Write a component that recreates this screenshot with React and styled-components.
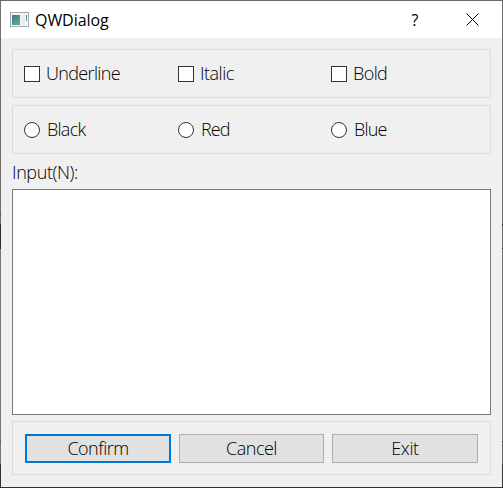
import React from "react";
import styled, { createGlobalStyle } from "styled-components";

const Page = createGlobalStyle`
  * { box-sizing: border-box; }
  body { margin: 0; overflow: hidden; }
`;

const Window = styled.div`
  display: grid;
  grid-template-columns: 1px 1fr 1px;
  grid-template-rows: 1px 486px 1px;
  width: 503px;
  height: 488px;
  background: #6f6f6f;
  font-family: "Open Sans", "Noto Sans", sans-serif;
  color: #000;
`;

const TopEdge = styled.div`
  grid-column: 1 / -1;
  background: #6a6a6a;
`;

const BottomEdge = styled.div`
  grid-column: 1 / -1;
  background: #323234;
`;

const LeftEdge = styled.div`
  background: linear-gradient(#6f6f6f 213px, #333 213px 214px, #6f6f6f 214px 223px, #2c2c2c 223px 248px, #777 248px 440px, #444 440px 441px, #777 441px 463px, #323234 463px);
`;

const RightEdge = styled.div`
  background: linear-gradient(#6f6f6f 223px, #2c2c2c 223px 225px, #6f6f6f 225px 247px, #333 247px 248px, #777 248px 440px, #444 440px 441px, #666 441px 463px, #323234 463px);
`;

const Surface = styled.div`
  display: flex;
  flex-direction: column;
  background: #f0f0f0;
`;

const TitleBar = styled.header`
  display: flex;
  align-items: center;
  height: 37px;
  padding: 0 23px 0 9px;
  background: #fff;
`;

const AppIcon = styled.svg`
  width: 19px;
  height: 16px;
  margin-right: 6px;
`;

const Title = styled.span`
  flex: 1;
  font-size: 16px;
  letter-spacing: -0.05px;
  line-height: 20px;
`;

const Help = styled.span`
  width: 10px;
  margin-right: 46px;
  font-size: 16px;
  line-height: 20px;
  text-align: center;
`;

const CloseIcon = styled.svg`
  width: 13px;
  height: 13px;
`;

const Body = styled.main`
  display: flex;
  flex-direction: column;
  padding: 11px 11px 12px;
`;

const Group = styled.section`
  display: grid;
  grid-template-columns: 154px 153px 1fr;
  align-items: center;
  height: 49px;
  margin-bottom: 7px;
  padding-left: 11px;
  border: 1px solid #dcdcdc;
`;

const Choice = styled.label`
  display: flex;
  align-items: center;
  gap: ${({ $round }) => ($round ? 7 : 6)}px;
`;

const Mark = styled.input`
  appearance: none;
  width: 16px;
  height: 16px;
  margin: 0;
  border: 1px solid #333;
  border-radius: ${({ type }) => (type === "radio" ? "50%" : "0")};
  background: #fff;
`;

const Text = styled.span`
  padding-bottom: 2px;
  font-size: 18px;
  font-weight: 300;
  line-height: 22px;
  letter-spacing: ${({ $tracking = -0.4 }) => $tracking}px;
  white-space: nowrap;
`;

const FieldLabel = styled.label`
  display: flex;
  align-items: flex-start;
  height: 28px;
`;

const Editor = styled.textarea`
  display: block;
  height: 226px;
  margin: 0 0 6px;
  border: 1px solid #7a7a7a;
  background: #fff;
  resize: none;
  outline: none;
`;

const Actions = styled.footer`
  display: grid;
  grid-template-columns: 146px 145px 146px;
  gap: 8px;
  height: 54px;
  padding: 12px;
  border: 1px solid #dcdcdc;
`;

const Button = styled.button`
  display: flex;
  align-items: center;
  justify-content: center;
  height: 29px;
  padding: 0;
  border: ${({ $primary }) => ($primary ? "2px solid #0078d7" : "1px solid #adadad")};
  background: #e1e1e1;
  color: #000;
  font-family: inherit;
`;

const styles = [
  { label: "Underline", tracking: -0.65 },
  { label: "Italic", tracking: -0.5 },
  { label: "Bold", tracking: -0.6 },
];
const colors = [
  { label: "Black", tracking: -0.75 },
  { label: "Red", tracking: -0.9 },
  { label: "Blue", tracking: -0.8 },
];

export default function App() {
  return (
    <>
      <Page />
      <Window>
        <TopEdge />
        <LeftEdge />
        <Surface>
          <TitleBar>
            <AppIcon viewBox="0 0 19 16">
              <defs>
                <linearGradient id="screen" x1="0" y1="0" x2="0.6" y2="1">
                  <stop offset="0" stopColor="#43729a" />
                  <stop offset="1" stopColor="#5bab80" />
                </linearGradient>
              </defs>
              <rect x="0.5" y="0.5" width="18" height="14" fill="#f4f5f5" stroke="#a5acb0" />
              <rect x="2" y="3" width="8" height="10" fill="url(#screen)" />
              <rect x="11" y="3" width="4" height="10" fill="#e9ecec" />
              <rect x="16" y="3" width="1" height="6" fill="url(#screen)" />
            </AppIcon>
            <Title>QWDialog</Title>
            <Help>?</Help>
            <CloseIcon viewBox="0 0 13 13">
              <path d="M0.5 0.5 12.5 12.5M12.5 0.5 0.5 12.5" fill="none" stroke="#000" strokeWidth="1" />
            </CloseIcon>
          </TitleBar>
          <Body>
            <Group>
              {styles.map(({ label, tracking }) => (
                <Choice key={label}>
                  <Mark type="checkbox" />
                  <Text $tracking={tracking}>{label}</Text>
                </Choice>
              ))}
            </Group>
            <Group>
              {colors.map(({ label, tracking }) => (
                <Choice key={label} $round>
                  <Mark type="radio" name="color" />
                  <Text $tracking={tracking}>{label}</Text>
                </Choice>
              ))}
            </Group>
            <FieldLabel htmlFor="editor">
              <Text>Input(N):</Text>
            </FieldLabel>
            <Editor id="editor" />
            <Actions>
              <Button $primary><Text $tracking={-0.5}>Confirm</Text></Button>
              <Button><Text $tracking={-0.5}>Cancel</Text></Button>
              <Button><Text>Exit</Text></Button>
            </Actions>
          </Body>
        </Surface>
        <RightEdge />
        <BottomEdge />
      </Window>
    </>
  );
}
